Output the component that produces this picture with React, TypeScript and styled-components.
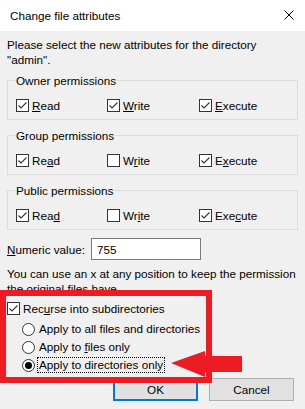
import styled, { createGlobalStyle } from 'styled-components';

const GlobalStyle = createGlobalStyle`
  html, body {
    margin: 0;
    padding: 0;
    background: #f0f0f0;
  }
  body {
    font-family: "Liberation Sans", Arial, sans-serif;
    font-size: 11.7px;
    color: #000;
  }
`;

const Window = styled.div`
  position: relative;
  width: 305px;
  height: 409px;
  background: #f0f0f0;
  overflow: hidden;
  display: flex;
  flex-direction: column;
`;

const TitleBar = styled.div`
  height: 31px;
  background: #fff;
  display: flex;
  align-items: center;
  justify-content: space-between;
  padding: 0 11px 0 10px;
  box-sizing: border-box;
  flex-shrink: 0;
`;

const Title = styled.span`
  line-height: 15px;
  margin-top: -1px;
`;

const CloseIcon = styled.svg`
  width: 10px;
  height: 10px;
  display: block;
  margin-top: -1px;
`;

const Content = styled.div`
  padding: 6px 7px 0 7px;
  display: flex;
  flex-direction: column;
`;

const Text = styled.p`
  margin: 0;
  line-height: 15px;
  white-space: nowrap;
`;

const Group = styled.fieldset<{ $first?: boolean }>`
  margin: ${(p) => (p.$first ? '6px' : '8px')} 0 0 0;
  padding: 9px 8px 6px 8px;
  border: 1px solid #dcdcdc;
  min-width: 0;
`;

const Legend = styled.legend`
  padding: 0 1px;
  margin-left: -1px;
  line-height: 15px;
`;

const CheckRow = styled.div`
  display: grid;
  grid-template-columns: 91px 92px auto;
  height: 16px;
  align-items: center;
`;

const Item = styled.label`
  display: flex;
  align-items: center;
  gap: 3px;
  line-height: 15px;
  height: 16px;
`;

const Box = styled.span`
  width: 13px;
  height: 13px;
  box-sizing: border-box;
  border: 1px solid #333;
  background: #fff;
  display: inline-flex;
  align-items: center;
  justify-content: center;
  flex-shrink: 0;
`;

const Radio = styled.span<{ $on?: boolean }>`
  width: 13px;
  height: 13px;
  box-sizing: border-box;
  border: 1px solid #333;
  border-radius: 50%;
  background: #fff;
  display: inline-flex;
  align-items: center;
  justify-content: center;
  flex-shrink: 0;
  &::after {
    content: '';
    width: 7px;
    height: 7px;
    border-radius: 50%;
    background: ${(p) => (p.$on ? '#000' : 'transparent')};
  }
`;

const Key = styled.span`
  text-decoration: underline;
  text-underline-offset: 1px;
`;

const NumericRow = styled.div`
  margin-top: 8px;
  display: flex;
  align-items: center;
  gap: 6px;
`;

const NumberField = styled.div`
  width: 110px;
  height: 22px;
  box-sizing: border-box;
  border: 1px solid #7a7a7a;
  background: #fff;
  padding-left: 5px;
  display: flex;
  align-items: center;
`;

const Hint = styled(Text)`
  margin-top: 6px;
`;

const Options = styled.div`
  margin-top: 4px;
  display: flex;
  flex-direction: column;
`;

const OptionRow = styled.div`
  height: 18px;
  display: flex;
  align-items: center;
  padding-left: 15px;
`;

const Recurse = styled(Item)`
  margin-bottom: 4px;
`;

const Focus = styled.span<{ $focused?: boolean }>`
  border: 1px dotted ${(p) => (p.$focused ? '#000' : 'transparent')};
  padding: 0 1px;
  line-height: 14px;
  margin-left: -1px;
`;

const Footer = styled.div`
  display: flex;
  justify-content: flex-end;
  gap: 11px;
  padding: 4px 11px 0 0;
`;

const Button = styled.button<{ $default?: boolean }>`
  width: 85px;
  height: 23px;
  box-sizing: border-box;
  font: inherit;
  color: #000;
  background: #e1e1e1;
  border: ${(p) => (p.$default ? '2px solid #0078d7' : '1px solid #adadad')};
  padding: 0;
`;

const Highlight = styled.div`
  position: absolute;
  left: 0;
  top: 290px;
  width: 212px;
  height: 93px;
  box-sizing: border-box;
  border: 6px solid #ed1c24;
  pointer-events: none;
`;

const Arrow = styled.svg`
  position: absolute;
  left: 170px;
  top: 350px;
  width: 74px;
  height: 28px;
`;

const Check = () => (
  <svg width="11" height="11" viewBox="0 0 11 11">
    <polyline points="1.5,5.5 4,8 9.5,2.5" fill="none" stroke="#333" strokeWidth="1.1" />
  </svg>
);

type Perm = { label: React.ReactNode; on: boolean };

const CheckItem = ({ label, on }: Perm) => (
  <Item>
    <Box>{on && <Check />}</Box>
    <span>{label}</span>
  </Item>
);

const groups: { name: string; perms: Perm[] }[] = [
  {
    name: 'Owner permissions',
    perms: [
      { label: <><Key>R</Key>ead</>, on: true },
      { label: <><Key>W</Key>rite</>, on: true },
      { label: <><Key>E</Key>xecute</>, on: true },
    ],
  },
  {
    name: 'Group permissions',
    perms: [
      { label: <>Re<Key>a</Key>d</>, on: true },
      { label: <>W<Key>r</Key>ite</>, on: false },
      { label: <>E<Key>x</Key>ecute</>, on: true },
    ],
  },
  {
    name: 'Public permissions',
    perms: [
      { label: <>Rea<Key>d</Key></>, on: true },
      { label: <>Wr<Key>i</Key>te</>, on: false },
      { label: <>Exe<Key>c</Key>ute</>, on: true },
    ],
  },
];

export default function App() {
  return (
    <Window>
      <GlobalStyle />
      <TitleBar>
        <Title>Change file attributes</Title>
        <CloseIcon viewBox="0 0 10 10">
          <path d="M0.5 0.5 L9.5 9.5 M9.5 0.5 L0.5 9.5" stroke="#000" strokeWidth="1" />
        </CloseIcon>
      </TitleBar>
      <Content>
        <Text>
          Please select the new attributes for the directory
          <br />
          "admin".
        </Text>
        {groups.map((g, i) => (
          <Group key={g.name} $first={i === 0}>
            <Legend>{g.name}</Legend>
            <CheckRow>
              {g.perms.map((p, j) => (
                <CheckItem key={j} label={p.label} on={p.on} />
              ))}
            </CheckRow>
          </Group>
        ))}
        <NumericRow>
          <span>
            <Key>N</Key>umeric value:
          </span>
          <NumberField>755</NumberField>
        </NumericRow>
        <Hint>
          You can use an x at any position to keep the permission
          <br />
          the original files have.
        </Hint>
        <Options>
          <Recurse>
            <Box>
              <Check />
            </Box>
            <span>
              Rec<Key>u</Key>rse into subdirectories
            </span>
          </Recurse>
          <OptionRow>
            <Item>
              <Radio />
              <Focus>Apply to all files and directories</Focus>
            </Item>
          </OptionRow>
          <OptionRow>
            <Item>
              <Radio />
              <Focus>
                Apply to <Key>f</Key>iles only
              </Focus>
            </Item>
          </OptionRow>
          <OptionRow>
            <Item>
              <Radio $on />
              <Focus $focused>Apply to directories only</Focus>
            </Item>
          </OptionRow>
        </Options>
      </Content>
      <Footer>
        <Button $default>OK</Button>
        <Button>Cancel</Button>
      </Footer>
      <Highlight />
      <Arrow viewBox="0 0 74 28">
        <polygon points="1,13 35,1 35,6 72,6 72,22 35,22 35,27" fill="#ed1c24" />
      </Arrow>
    </Window>
  );
}
